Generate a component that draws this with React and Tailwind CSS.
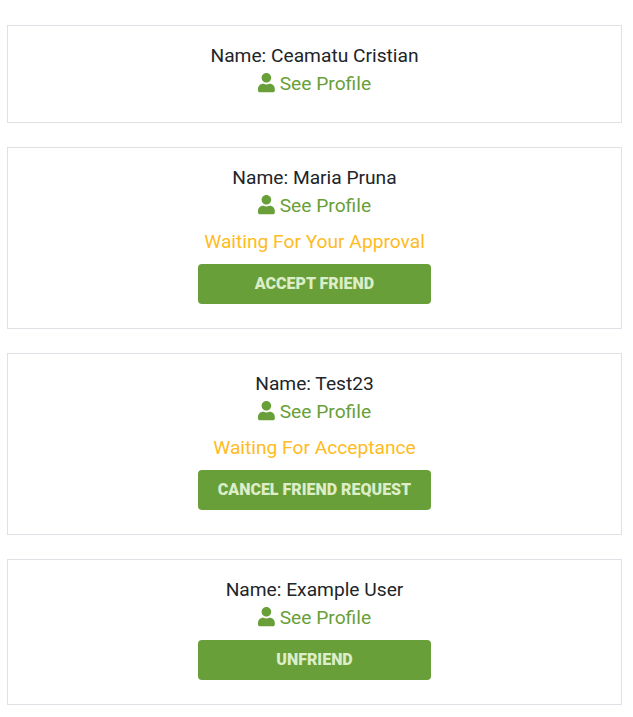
import { FaUser } from "react-icons/fa";

const friends = [
  { name: "Ceamatu Cristian", height: "h-[98px]" },
  { name: "Maria Pruna", status: "Waiting For Your Approval", action: "Accept Friend", height: "h-[182px]" },
  { name: "Test23", status: "Waiting For Acceptance", action: "Cancel Friend Request", height: "h-[182px]" },
  { name: "Example User", action: "Unfriend", height: "h-[146px]" },
];

function FriendCard({ name, status, action, height }) {
  return (
    <section className={`flex flex-col items-center border border-[#dee2e6] pt-4 ${height}`}>
      <p>Name: {name}</p>
      <a href="#" className="flex items-center gap-[5px] text-[#689f38]">
        <FaUser className="mb-[2px] h-[19.2px] w-[16.8px]" />
        <span>See Profile</span>
      </a>
      {status && <p className="mt-2 text-[#ffbb22]">{status}</p>}
      {action && (
        <button className="mt-2 h-10 w-[233px] rounded-[4px] bg-[#689f38] text-base font-black text-[#dcedc8] uppercase">
          {action}
        </button>
      )}
    </section>
  );
}

export default function App() {
  return (
    <main className="flex h-[717px] w-[633px] flex-col gap-6 bg-white pt-[25px] pr-[11px] pl-[7px] font-['Roboto',sans-serif] text-[19.2px] leading-7 text-[#212529]">
      {friends.map((friend) => (
        <FriendCard key={friend.name} {...friend} />
      ))}
    </main>
  );
}
